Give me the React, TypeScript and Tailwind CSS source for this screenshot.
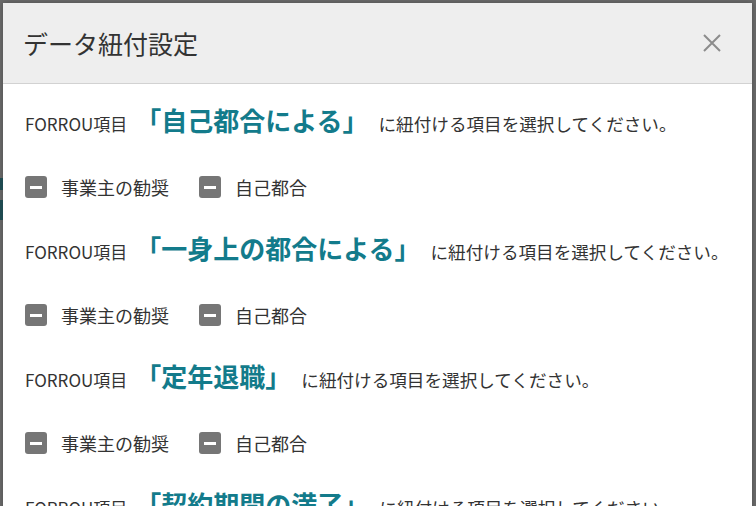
import React from "react";

const sections = [
  "「自己都合による」",
  "「一身上の都合による」",
  "「定年退職」",
  "「契約期間の満了」",
];

function MinusBox() {
  return (
    <span className="flex h-[22px] w-[22px] items-center justify-center rounded-[3px] bg-[#767676]">
      <span className="h-[3px] w-[12px] bg-white" />
    </span>
  );
}

function CheckItem({ label }: { label: string }) {
  return (
    <div className="flex items-center gap-[14px]">
      <MinusBox />
      <span className="text-[18px] text-[#333333]">{label}</span>
    </div>
  );
}

export default function App() {
  return (
    <div
      className="relative h-[506px] w-[756px] overflow-hidden bg-[#6c6c6c] pl-[3px] pr-[4px] pt-[3px]"
      style={{ fontFamily: '"Noto Sans CJK JP", "Noto Sans", sans-serif' }}
    >
      <div className="absolute left-0 top-[178px] h-[12px] w-[3px] bg-[#1f4a50]" />
      <div className="absolute left-0 top-[200px] h-[20px] w-[3px] bg-[#1f4a50]" />
      <div className="flex h-[600px] flex-col bg-white shadow-[0_0_6px_rgba(0,0,0,0.3)]">
        <div className="flex h-[81px] shrink-0 items-center justify-between border-b border-[#d2d2d2] bg-[#eeeeee] pl-[20px] pr-[30px]">
          <h1 className="text-[25px] font-normal leading-none text-[#333333]">
            データ紐付設定
          </h1>
          <svg width="20" height="20" viewBox="0 0 20 20" className="mt-[-1px]">
            <path
              d="M2 2 L18 18 M18 2 L2 18"
              stroke="#8c8c8c"
              strokeWidth="2"
              fill="none"
            />
          </svg>
        </div>
        <div className="flex flex-col pt-[7px] pl-[22px]">
          {sections.map((s) => (
            <div key={s} className="flex flex-col">
              <div className="flex h-[64px] items-center pb-[8px]">
                <div className="flex items-baseline text-[#333333]">
                  <span className="text-[17px]">FORROU項目</span>
                  <span className="ml-[8px] mr-[10px] text-[26px] font-bold text-[#137b8b]">
                    {s}
                  </span>
                  <span className="text-[17.6px]">に紐付ける項目を選択してください。</span>
                </div>
              </div>
              <div className="flex h-[64px] items-center gap-[30px]">
                <CheckItem label="事業主の勧奨" />
                <CheckItem label="自己都合" />
              </div>
            </div>
          ))}
        </div>
      </div>
    </div>
  );
}
